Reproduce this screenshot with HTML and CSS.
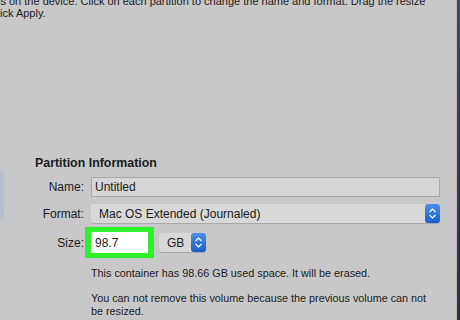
FILE: index.html
```html
<!DOCTYPE html>
<html lang="en">
<head>
<meta charset="UTF-8">
<meta name="viewport" content="width=device-width, initial-scale=1.0">
<title>Partition Information</title>
<link rel="stylesheet" href="styles.css">
</head>
<body>

<div class="screen">
    <div class="panel">
        <div class="pie"></div>
        <div class="slice"></div>

        <p class="intro">
            <span class="line first">is on the device. Click on each partition to change the name and format. Drag the resize</span>
            <span class="line">ick Apply.</span>
        </p>

        <div class="info">
            <h2>Partition Information</h2>

            <div class="row">
                <label class="label" for="name">Name:</label>
                <input type="text" id="name" class="field" value="Untitled">
            </div>

            <div class="row">
                <span class="label">Format:</span>
                <div class="popup wide">
                    <span class="popup-text">Mac OS Extended (Journaled)</span>
                    <span class="stepper">
                        <svg width="9" height="13" viewBox="0 0 9 13"><path d="M1.5 5 L4.5 2 L7.5 5 M1.5 8 L4.5 11 L7.5 8" fill="none" stroke="#fff" stroke-width="1.2"/></svg>
                    </span>
                </div>
            </div>

            <div class="row size-row">
                <span class="label">Size:</span>
                <div class="highlight">
                    <input type="text" class="size-field" value="98.7">
                </div>
                <div class="popup unit">
                    <span class="popup-text">GB</span>
                    <span class="stepper">
                        <svg width="9" height="13" viewBox="0 0 9 13"><path d="M1.5 5 L4.5 2 L7.5 5 M1.5 8 L4.5 11 L7.5 8" fill="none" stroke="#fff" stroke-width="1.2"/></svg>
                    </span>
                </div>
            </div>

            <div class="notes">
                <p>This container has 98.66 GB used space. It will be erased.</p>
                <p>You can not remove this volume because the previous volume can not be resized.</p>
            </div>
        </div>
    </div>
    <div class="edge"></div>
</div>

</body>
</html>
```

FILE: styles.css
```css
body {
    margin: 0;
    padding: 0;
    background-color: #c8c8c8;
    font-family: "Liberation Sans", Arial, sans-serif;
    color: #1b1b1b;
    overflow: hidden;
}

.screen {
    display: flex;
    width: 460px;
    height: 320px;
}

.panel {
    position: relative;
    flex: 1;
    background-color: #c8c8c8;
    border-right: 1px solid #b9b9bd;
    overflow: hidden;
}

/* edge of the partition pie chart, mostly off screen */
.pie {
    position: absolute;
    left: -200px;
    top: 45px;
    width: 225px;
    height: 235px;
    border-radius: 50%;
    background-color: #c4c6c8;
    filter: blur(3px);
}

.slice {
    position: absolute;
    left: 0;
    top: 172px;
    width: 3px;
    height: 46px;
    background-color: #a9b8d0;
    filter: blur(1px);
}

.intro {
    position: relative;
    margin: -5px 0 0 0;
    font-size: 11px;
    line-height: 12px;
}

.line {
    display: block;
    white-space: nowrap;
}

.line.first {
    margin-left: -2px;
}

.info {
    position: relative;
    padding: 137px 0 0 35px;
    width: 410px;
}

h2 {
    margin: 0 0 6px 0;
    font-size: 12.4px;
    font-weight: bold;
    line-height: 15px;
}

.row {
    display: flex;
    align-items: center;
    margin-bottom: 7px;
}

.label {
    width: 49px;
    text-align: right;
    font-size: 12px;
    margin-right: 7px;
}

.field {
    width: 349px;
    height: 20px;
    box-sizing: border-box;
    margin: 0;
    padding: 0 3px;
    border: 1px solid #a9a9a9;
    background-color: #d6d6d6;
    font-family: inherit;
    font-size: 12px;
    color: #1b1b1b;
}

.popup {
    display: flex;
    align-items: center;
    height: 19px;
    box-sizing: border-box;
    background-color: #d8d8d8;
    border-radius: 3px;
    box-shadow: 0 1px 0 #a8a8a8;
}

.popup.wide {
    width: 349px;
}

.popup-text {
    flex: 1;
    padding-left: 8px;
    font-size: 12px;
}

.stepper {
    display: flex;
    align-items: center;
    justify-content: center;
    width: 15px;
    height: 19px;
    border-radius: 3px;
    background: linear-gradient(#4c8fe6, #1c5fc9);
}

.size-row {
    margin-top: -3px;
    margin-bottom: 0;
}

.highlight {
    margin-left: -6px;
    padding: 5px 6px;
    background-color: #2ef02a;
}

.size-field {
    display: block;
    width: 57px;
    height: 21px;
    box-sizing: border-box;
    margin: 0;
    padding: 0 4px;
    border: none;
    background-color: #fff;
    font-family: inherit;
    font-size: 12px;
    color: #1b1b1b;
}

.popup.unit {
    width: 47px;
    margin-left: 5px;
}

.notes {
    padding: 9px 10px 0 56px;
    font-size: 10.8px;
    line-height: 13px;
}

.notes p {
    margin: 0 0 12px 0;
}

.edge {
    width: 3px;
    background: linear-gradient(#3b4b68, #26324a);
}
```
